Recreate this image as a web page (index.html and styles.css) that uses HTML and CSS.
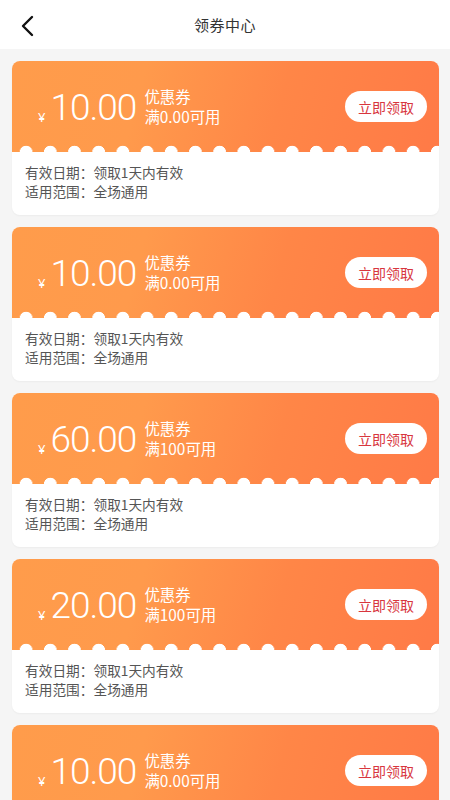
FILE: index.html
```html
<!DOCTYPE html>
<html lang="zh">
<head>
<meta charset="utf-8">
<title>领券中心</title>
<link rel="stylesheet" href="styles.css">
</head>
<body>
<header class="nav">
  <span class="back"><svg width="16" height="22" viewBox="0 0 16 22"><path d="M12 2 L3 11 L12 20" fill="none" stroke="#111" stroke-width="2.4" stroke-linecap="round" stroke-linejoin="round"/></svg></span>
  <h1 class="title">领券中心</h1>
</header>
<main class="list">
  <div class="coupon">
    <div class="top">
      <div class="row">
        <span class="yen">¥</span><span class="amount">10.00</span>
        <div class="desc"><div>优惠券</div><div>满0.00可用</div></div>
        <button class="get">立即领取</button>
      </div>
      <div class="scallop"></div>
    </div>
    <div class="info"><div>有效日期：领取1天内有效</div><div>适用范围：全场通用</div></div>
  </div>
  <div class="coupon">
    <div class="top">
      <div class="row">
        <span class="yen">¥</span><span class="amount">10.00</span>
        <div class="desc"><div>优惠券</div><div>满0.00可用</div></div>
        <button class="get">立即领取</button>
      </div>
      <div class="scallop"></div>
    </div>
    <div class="info"><div>有效日期：领取1天内有效</div><div>适用范围：全场通用</div></div>
  </div>
  <div class="coupon">
    <div class="top">
      <div class="row">
        <span class="yen">¥</span><span class="amount">60.00</span>
        <div class="desc"><div>优惠券</div><div>满100可用</div></div>
        <button class="get">立即领取</button>
      </div>
      <div class="scallop"></div>
    </div>
    <div class="info"><div>有效日期：领取1天内有效</div><div>适用范围：全场通用</div></div>
  </div>
  <div class="coupon">
    <div class="top">
      <div class="row">
        <span class="yen">¥</span><span class="amount">20.00</span>
        <div class="desc"><div>优惠券</div><div>满100可用</div></div>
        <button class="get">立即领取</button>
      </div>
      <div class="scallop"></div>
    </div>
    <div class="info"><div>有效日期：领取1天内有效</div><div>适用范围：全场通用</div></div>
  </div>
  <div class="coupon">
    <div class="top">
      <div class="row">
        <span class="yen">¥</span><span class="amount">10.00</span>
        <div class="desc"><div>优惠券</div><div>满0.00可用</div></div>
        <button class="get">立即领取</button>
      </div>
      <div class="scallop"></div>
    </div>
    <div class="info"><div>有效日期：领取1天内有效</div><div>适用范围：全场通用</div></div>
  </div>
</main>
</body>
</html>
```
FILE: styles.css
```css
* { box-sizing: border-box; }
html, body { margin: 0; padding: 0; }
body {
  background: #f5f5f5;
  font-family: "Noto Sans CJK SC", "Noto Sans", sans-serif;
  width: 450px;
  height: 800px;
  overflow: hidden;
}
.nav {
  height: 49px;
  background: #fff;
  display: flex;
  align-items: center;
  justify-content: center;
  position: relative;
}
.back {
  position: absolute;
  left: 20px;
  top: 15px;
  display: flex;
}
.title {
  margin: 0;
  font-size: 15px;
  font-weight: 400;
  color: #333;
  letter-spacing: 0.5px;
}
.list {
  padding: 12px 11px 0 12px;
  display: flex;
  flex-direction: column;
  gap: 12px;
}
.coupon {
  background: #fff;
  border-radius: 8px;
  overflow: hidden;
  box-shadow: 0 1px 2px rgba(0,0,0,0.04);
  flex-shrink: 0;
}
.top {
  background: linear-gradient(105deg, #ff9c4b 0%, #ff9a4c 30%, #ff8647 62%, #ff7a47 100%);
}
.row {
  height: 84px;
  display: flex;
  align-items: center;
  padding: 8px 12px 0 26px;
  color: #fff;
}
.yen {
  font-family: "Noto Sans", sans-serif;
  font-size: 13px;
  align-self: center;
  margin-top: 20px;
  margin-right: 5px;
}
.amount {
  font-family: Roboto, sans-serif;
  font-weight: 300;
  font-size: 37px;
  line-height: 1;
  letter-spacing: -1px;
}
.desc {
  margin-left: 8px;
  font-size: 15.4px;
  line-height: 20px;
  margin-top: -3px;
}
.get {
  margin-left: auto;
  width: 82px;
  height: 31px;
  border: none;
  border-radius: 16px;
  background: #fff;
  color: #d8363e;
  font-family: "Noto Sans CJK SC", sans-serif;
  font-size: 14px;
  padding: 0;
  margin-top: -1px;
}
.scallop {
  height: 7px;
  background: radial-gradient(circle at 50% 100%, #fff 6px, rgba(255,255,255,0) 6.6px) 0 0 / 24.2px 7px repeat-x;
  background-position: 2px 0;
}
.info {
  height: 63px;
  padding: 11px 0 0 13px;
  font-size: 13.7px;
  line-height: 19px;
  color: #555;
}
```
